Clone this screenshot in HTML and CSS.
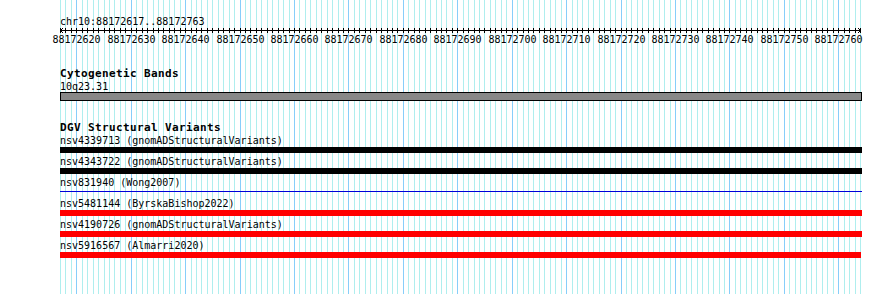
FILE: index.html
```html
<!DOCTYPE html>
<html>
<head>
<meta charset="utf-8">
<title>chr10:88172617..88172763</title>
<link rel="stylesheet" href="styles.css">
</head>
<body>
<div class="view">
  <svg class="grid" id="grid" width="890" height="294" shape-rendering="crispEdges"></svg>
  <div class="tracks">
    <div class="region">chr10:88172617..88172763</div>
    <svg class="ruler" id="ruler" width="890" height="20" shape-rendering="crispEdges"></svg>
    <section class="track cyto">
      <h2 class="track-title">Cytogenetic Bands</h2>
      <div class="feature">
        <div class="label">10q23.31</div>
        <div class="bar band"></div>
      </div>
    </section>
    <section class="track dgv">
      <h2 class="track-title">DGV Structural Variants</h2>
      <div class="feature">
        <div class="label">nsv4339713 (gnomADStructuralVariants)</div>
        <div class="bar black"></div>
      </div>
      <div class="feature">
        <div class="label">nsv4343722 (gnomADStructuralVariants)</div>
        <div class="bar black"></div>
      </div>
      <div class="feature">
        <div class="label">nsv831940 (Wong2007)</div>
        <div class="bar thin"></div>
      </div>
      <div class="feature">
        <div class="label">nsv5481144 (ByrskaBishop2022)</div>
        <div class="bar red"></div>
      </div>
      <div class="feature">
        <div class="label">nsv4190726 (gnomADStructuralVariants)</div>
        <div class="bar red"></div>
      </div>
      <div class="feature">
        <div class="label">nsv5916567 (Almarri2020)</div>
        <div class="bar red short"></div>
      </div>
    </section>
  </div>
</div>
<script src="script.js"></script>
</body>
</html>
```
FILE: styles.css
```css
html, body {
  margin: 0;
  padding: 0;
  background: #ffffff;
}

.view {
  position: relative;
  width: 890px;
  height: 294px;
  overflow: hidden;
  font-family: "DejaVu Sans Mono", "Liberation Mono", monospace;
  font-size: 10px;
  color: #000000;
}

.grid {
  position: absolute;
  top: 0;
  left: 0;
}

.grid .minor {
  stroke: #afeeee;
  stroke-width: 1;
}

.grid .major {
  stroke: #87cefa;
  stroke-width: 1;
}

.tracks {
  position: relative;
  display: flex;
  flex-direction: column;
}

.region {
  margin-top: 15px;
  padding-left: 60px;
  height: 13px;
  line-height: 13px;
}

.ruler {
  display: block;
  height: 20px;
}

.ruler .axis,
.ruler .tick {
  stroke: #000000;
  stroke-width: 1;
  fill: none;
}

.ruler .num {
  font-family: "DejaVu Sans Mono", "Liberation Mono", monospace;
  font-size: 10px;
  fill: #000000;
}

.track {
  display: flex;
  flex-direction: column;
  padding-left: 60px;
}

.cyto {
  margin-top: 20px;
}

.dgv {
  margin-top: 21px;
}

.track-title {
  margin: 0;
  font-size: 11px;
  font-weight: bold;
  letter-spacing: 0.38px;
  line-height: 12px;
  height: 12px;
}

.feature {
  display: flex;
  flex-direction: column;
  margin-bottom: 2px;
}

.cyto .feature {
  margin-bottom: 0;
}

.label {
  height: 13px;
  line-height: 13px;
  white-space: nowrap;
}

.bar {
  width: 802px;
  height: 6px;
}

.bar.band {
  box-sizing: border-box;
  height: 9px;
  margin-top: -1px;
  border: 1px solid #000000;
  background: #888888;
}

.bar.black {
  background: #000000;
}

.bar.red {
  background: #ff0000;
}

.bar.red.short {
  width: 801px;
}

.bar.thin {
  height: 1px;
  margin: 2px 0 3px;
  background: #0000d8;
}
```
FILE: script.js
```js
(function () {
  var NS = "http://www.w3.org/2000/svg";
  var start = 88172617;
  var bases = 147;
  var x0 = 60;
  var width = 800;
  var step = width / bases;

  function el(name, attrs, parent) {
    var e = document.createElementNS(NS, name);
    for (var k in attrs) e.setAttribute(k, attrs[k]);
    parent.appendChild(e);
    return e;
  }

  var grid = document.getElementById("grid");
  var ruler = document.getElementById("ruler");

  for (var i = 0; i <= bases; i++) {
    var x = Math.round(x0 + i * step) + 0.5;
    var pos = start + i;
    var major = pos % 10 === 0;
    el("line", { x1: x, x2: x, y1: 0, y2: 294, "class": major ? "major" : "minor" }, grid);
    el("line", { x1: x, x2: x, y1: 0, y2: 5, "class": "tick" }, ruler);
    if (major) {
      var t = el("text", { x: x, y: 15, "text-anchor": "middle", "class": "num" }, ruler);
      t.textContent = String(pos);
    }
  }

  el("line", { x1: 60, x2: 861, y1: 2.5, y2: 2.5, "class": "axis" }, ruler);
  el("path", { d: "M63.5 -0.5 L60.5 2.5 L63.5 5.5", "class": "axis" }, ruler);
  el("path", { d: "M857.5 -0.5 L860.5 2.5 L857.5 5.5", "class": "axis" }, ruler);
})();
```
